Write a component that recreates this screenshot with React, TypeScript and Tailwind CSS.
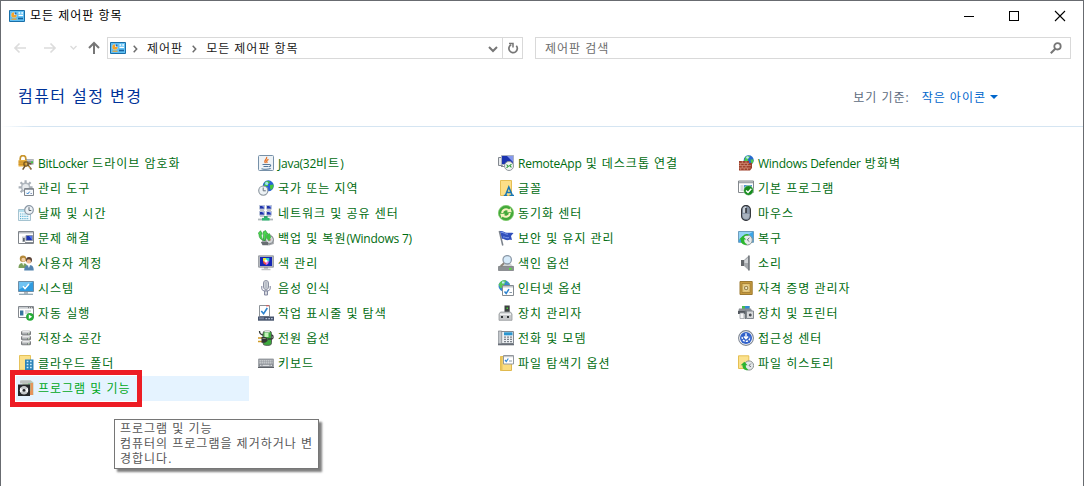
import type { ReactNode } from "react"

type Item = { label: string; icon: ReactNode; active?: boolean }

const columns: Item[][] = [
  [
    {
      label: "BitLocker 드라이브 암호화",
      icon: (
        <>
          <path d="M2.2 6V3.4a2.8 2.8 0 0 1 5.6 0V6" fill="none" stroke="#c9962f" strokeWidth="1.7" />
          <path d="M8 4h7.5v5.5H9z" fill="#8d9298" />
          <path d="M9 4.5h6v1.2H9z" fill="#d6dadd" />
          <path d="M13 6.5h2V8h-2z" fill="#3fd23f" />
          <path d="M.5 5h8.3v6.5H.5z" fill="#e8b040" />
          <path d="M.5 7h8.3M.5 9.2h8.3" stroke="#b98022" strokeWidth=".8" />
          <circle cx="8" cy="9" r="2.1" fill="none" stroke="#7a5a22" strokeWidth="1.4" />
          <path d="m7 11-2.3 3.7M9.6 9.5l3.8 5M10 8.2l3.4.8" stroke="#6d5634" strokeWidth="1.5" />
          <path d="m10.5 11 1.8 2.3" stroke="#e7b54c" />
        </>
      ),
    },
    {
      label: "관리 도구",
      icon: (
        <>
          <path d="M7.6.3v14M.6 7.3h14M2.6 2.3l10 10M12.6 2.3l-10 10" stroke="#a9b0b8" strokeWidth="2.2" />
          <circle cx="7.6" cy="7.3" r="4" fill="#e9ecef" stroke="#b0b7be" strokeWidth="1.5" />
          <path d="M6.5 8.5h9v7h-9z" fill="#f7fafc" stroke="#7f858c" />
          <path d="M7 9h8v1H7z" fill="#9aa0a8" />
          <path d="m8.5 12.8 1.2 1.2 2-2.4" fill="none" stroke="#2c7fd0" />
          <path d="M12.5 13.5H14" stroke="#89b" />
        </>
      ),
    },
    {
      label: "날짜 및 시간",
      icon: (
        <>
          <path d="M.5 4.5h12v11H.5z" fill="#eff8fc" stroke="#a5c3d0" />
          <path d="M1 5h11v2H1z" fill="#b5dfee" />
          <path d="M2 9h9M2 11.3h9M2 13.6h9" stroke="#5fb3d4" strokeWidth="1.2" strokeDasharray="1.2 1" />
          <circle cx="11" cy="5" r="4.3" fill="#edf2f6" stroke="#8b98a5" strokeWidth="1.2" />
          <path d="M11 2.2V5.5h2.3" fill="none" stroke="#5c6670" />
        </>
      ),
    },
    {
      label: "문제 해결",
      icon: (
        <>
          <path d="M.5 1.5h15v12H.5z" fill="#fff" stroke="#7e8389" />
          <path d="M1 2h14v1.5H1z" fill="#b8bdc3" />
          <path d="M4 6.5h3.5V12H4z" fill="#c8ccd0" />
          <path d="M5 8h1.7v3.5H5z" fill="#5b6168" />
          <path d="M8 5.5h6.5v5H8z" fill="#1c34b4" stroke="#8b93a8" />
          <path d="M11 6h3v4z" fill="#5577ee" />
          <path d="M7 12h8v1H7z" fill="#858b92" />
        </>
      ),
    },
    {
      label: "사용자 계정",
      icon: (
        <>
          <circle cx="5" cy="3.7" r="3.2" fill="#b58a3b" />
          <circle cx="5.4" cy="4.8" r="2" fill="#f4cfa4" />
          <path d="M.5 13c0-4 2-5 4.5-5s4.5 1.5 4.5 5z" fill="#7ba05b" />
          <path d="m4 8 1.3 2.7L6.7 8z" fill="#e8efe0" />
          <circle cx="11" cy="5" r="3" fill="#594034" />
          <circle cx="10.8" cy="6.4" r="2.2" fill="#efb98f" />
          <path d="M6.2 15.5c0-4.5 2-5.5 4.8-5.5s4.7 1 4.7 5.5z" fill="#5383ae" />
          <path d="m9.5 10 1.4 3 1.4-3z" fill="#e8f1f8" />
        </>
      ),
    },
    {
      label: "시스템",
      icon: (
        <>
          <path d="M.5 1.5h15v10H.5z" fill="#2f9be0" stroke="#6d8da6" />
          <path d="M1 2h14L1 9.5z" fill="#6fc3f3" />
          <path d="m5 6.3 2 2.2 4-4.6" fill="none" stroke="#fff" strokeWidth="1.5" />
          <path d="M6 12h4v2H6z" fill="#b3bac0" />
          <path d="M1 14.3h14" stroke="#8fa5b3" strokeWidth="1.3" />
        </>
      ),
    },
    {
      label: "자동 실행",
      icon: (
        <>
          <path d="M.5 1.5h15v11H.5z" fill="#fff" stroke="#83888e" />
          <path d="M1 2h14v1.7H1z" fill="#c8ccd0" />
          <path d="M10 2.7h1M12 2.7h1M14 2.7h1" stroke="#666" />
          <path d="M2 5.5h3.4v5H2z" fill="#39769f" />
          <path d="M7 6h6M7 8h4" stroke="#aab2ba" />
          <circle cx="12" cy="11.8" r="3.9" fill="#24ab36" />
          <path d="m10.8 9.6 3.3 2.2-3.3 2.2z" fill="#fff" />
        </>
      ),
    },
    {
      label: "저장소 공간",
      icon: (
        <>
          {[1, 6, 11].map((y) => (
            <g key={y}>
              <rect x="3" y={y - 0.3} width="10" height="4.6" rx="1.5" fill="#77797c" />
              <rect x="4" y={y} width="8" height="1.8" rx=".9" fill="#e8e9ea" />
              <path d={`M4.2 ${y + 2.8}h5`} stroke="#c7cacc" />
              <path d={`M10 ${y + 2.8}h1.5`} stroke="#d5f0c8" />
            </g>
          ))}
        </>
      ),
    },
    {
      label: "클라우드 폴더",
      icon: (
        <>
          <path d="M1.5.5h11V15h-11z" fill="#fbe08a" stroke="#e6c35b" />
          <path d="M7 4.5h8.5V16H7z" fill="#2c83b8" />
          <path d="M8.7 6.5h1.7M12 6.5h1.7M8.7 9.5h1.7M12 9.5h1.7M8.7 12.5h1.7M12 12.5h1.7" stroke="#c9ecfb" strokeWidth="1.7" />
        </>
      ),
    },
    {
      label: "프로그램 및 기능",
      active: true,
      icon: (
        <>
          <path d="M3 .5h10l2.5 2V15H9z" fill="#b9cbb4" />
          <path d="M2 .5h11v3H2z" fill="#bcc0bf" />
          <path d="M11 3h4v12h-4z" fill="#e7935c" />
          <path d="M10 3h2.5v8H10z" fill="#8cbf9a" />
          <path d="M0 4.5h12V16H0z" fill="#25282b" />
          <circle cx="6" cy="10.3" r="4.2" fill="#c4c8ca" />
          <path d="m6 10.3 4-2.2v4.3zM6 10.3 2 8v4.5z" fill="#f7f9fa" />
          <circle cx="6" cy="10.3" r="1.4" fill="#25282b" />
        </>
      ),
    },
  ],
  [
    {
      label: "Java(32비트)",
      icon: (
        <>
          <rect x=".5" y=".5" width="15" height="15" rx="1" fill="#eef3f7" stroke="#7690a8" />
          <path d="M8.5 2c1.5 2-3.5 3-1 6M10.5 4.3C8.6 5.3 8.2 6.2 9.2 8" fill="none" stroke="#e76f22" strokeWidth="1.3" />
          <path d="M4.5 9.5h6.8c2 0 1.8 2-.3 2.2M5.5 11.5h5M3.5 13.7c3 .7 7 .6 9.2-.2" fill="none" stroke="#52779a" strokeWidth="1.1" />
        </>
      ),
    },
    {
      label: "국가 또는 지역",
      icon: (
        <>
          <circle cx="10.3" cy="5.8" r="5.5" fill="#2a62d4" />
          <path d="M7 2c3-2 5-.5 5 .5L10 4v2H6zM12 5l3.5-.5c.2 2.500-.7 4.500-2.500 5.500l-1-2z" fill="#45c63c" />
          <circle cx="8.7" cy="3.4" r="1.6" fill="#9ce2fa" />
          <circle cx="5.3" cy="10.6" r="4.6" fill="#edf2f5" stroke="#8b959e" strokeWidth="1.1" />
          <path d="M5.2 7.5v3.3h2.6" fill="none" stroke="#66707a" />
        </>
      ),
    },
    {
      label: "네트워크 및 공유 센터",
      icon: (
        <>
          {["1 0", "8 0", "1 6", "8 6"].map((p) => (
            <g key={p} transform={`translate(${p})`}>
              <path d="M.5.5h5v3.600h-5z" fill="#2133a8" stroke="#b9c3d8" />
              <path d="M3 1h2v2z" fill="#7e96f0" />
              <path d="M1 5.2h4" stroke="#a2a9b0" />
            </g>
          ))}
          <path d="M6 11h3.600V13H6z" fill="#2fa56b" />
          <path d="M0 14.5h15" stroke="#b0b8bc" strokeWidth="1.8" />
          <path d="M4 14.2h7.500" stroke="#2fb873" strokeWidth="2.6" />
        </>
      ),
    },
    {
      label: "백업 및 복원(Windows 7)",
      icon: (
        <>
          <path d="M7 4.5h6l2.8 5V14l-5 1.5L3 13z" fill="#a2a6aa" />
          <circle cx="11.5" cy="9.7" r="4" fill="#d3d6d9" stroke="#83878b" />
          <circle cx="11.5" cy="9.7" r="1.2" fill="#a67864" />
          <path d="M3 12h7v3.3H4.5z" fill="#686d72" />
          <path d="M0 3.5 2.5.7l2 3.5H3.2c0 3 .8 4.5 2.6 6.3C3 10 1 8 1 4.5zM5 2 7.5.5 9.8 4H8.2c0 3-.2 5-1.4 7C4.7 8.5 5 6 5.7 4z" fill="#4bd84f" stroke="#1e8b2b" strokeWidth=".6" />
          <path d="M9 4.500 11.500 3l1.500 4.500L10.500 11 8.500 8z" fill="#3cc442" />
        </>
      ),
    },
    {
      label: "색 관리",
      icon: (
        <>
          <path d="M.6.800h14.800v11.400H.6z" fill="#b9bdc2" stroke="#858a90" strokeWidth=".8" />
          <path d="M2 2h12v9H2z" fill="#1627b5" />
          <path d="M5 3h3v4H5z" fill="#e9e73a" />
          <path d="M8 3h3.300v3.500H8z" fill="#31d3d9" />
          <path d="M5 6h3v4L5.500 8.500z" fill="#f14c44" />
          <path d="M8 6.300h3L10 9l-2 1z" fill="#e36be3" />
          <circle cx="8" cy="6" r="1.6" fill="#fff" />
          <path d="M6 12h4v1.600H6z" fill="#9a9ea3" />
          <path d="M3.500 14.500h9" stroke="#c0c3c6" strokeWidth="1.5" />
        </>
      ),
    },
    {
      label: "음성 인식",
      icon: (
        <>
          <rect x="5.5" y=".5" width="5" height="9" rx="2.5" fill="#eceef1" stroke="#8a8fa0" />
          <path d="M6 3h4M6 5h4M6 7h4M8 1v8" stroke="#a0a5b3" strokeWidth=".8" />
          <path d="M3.8 6v2.8c0 3 8.4 3 8.4 0V6" fill="none" stroke="#7b809a" />
          <path d="M6.5 11h3v4h-3z" fill="#d8dae0" stroke="#7b809a" strokeWidth=".9" />
        </>
      ),
    },
    {
      label: "작업 표시줄 및 탐색",
      icon: (
        <>
          <path d="M1.5.5h10v11h-10z" fill="#fff" stroke="#8c9297" />
          <path d="M8 .8h3" stroke="#d65454" />
          <path d="m3.3 6 2.3 2.7L9.3 3" fill="none" stroke="#2b82ce" strokeWidth="1.6" />
          <path d="M0 11.500h16v4.200H0z" fill="#46536c" />
          <path d="M1 12.300h5v2H1z" fill="#74819b" />
          <path d="M7.500 13.700h1.700M10.300 13.700H12M13 13.700h1.700" stroke="#b4c0d4" strokeWidth="1.2" />
        </>
      ),
    },
    {
      label: "전원 옵션",
      icon: (
        <>
          <rect x="5" y="1" width="8.5" height="14.3" rx="2.5" fill="#3da83d" stroke="#566158" />
          <path d="M6.5 3h4v4h-4z" fill="#c3f2b8" />
          <path d="M6.5.5h5.3v2H6.5z" fill="#dfe4df" />
          <path d="M1.5 1c0 2.5 1 3.5 3.5 4M10 9h3.5c2 0 2.2-3.5.2-4" fill="none" stroke="#363b38" strokeWidth="1.3" />
          <path d="M0 8h4M0 11.5h4" stroke="#cf9a25" strokeWidth="1.6" />
          <path d="M3.500 7H7l2.500 1.300v2.700L7 12.700H3.500z" fill="#343634" />
          <path d="M4.500 8H7l1.500 1H4.500z" fill="#848884" />
        </>
      ),
    },
    {
      label: "키보드",
      icon: (
        <>
          <path d="M.5 4h15v8.500H.5z" fill="#8a8e94" stroke="#a2a6ab" />
          <path d="M1.500 5.800h13M1.500 7.800h13" stroke="#eceeef" strokeWidth="1.2" strokeDasharray="1.3 .7" />
          <path d="M2 10.300h1.500M4.500 10.300h7M12.500 10.300H14" stroke="#eceeef" />
          <path d="M0 12.500h16" stroke="#5d6167" />
        </>
      ),
    },
  ],
  [
    {
      label: "RemoteApp 및 데스크톱 연결",
      icon: (
        <>
          <path d="M.5 2.5h4v8h-4z" fill="#e6e9ed" stroke="#83888f" />
          <path d="M3.5.5h12v9h-12z" fill="#1c34b0" stroke="#aab1c0" />
          <path d="M9 1h6v6z" fill="#8398ee" />
          <path d="M3 11.500h5" stroke="#83888f" />
          <circle cx="11" cy="11" r="4.5" fill="#f1f3f4" stroke="#90969c" />
          <path d="m8.500 9.700 1.800 1.500-1.800 1.600M13.500 9.200l-1.800 1.500 1.800 1.600" fill="none" stroke="#2a9b35" strokeWidth="1.1" />
        </>
      ),
    },
    {
      label: "글꼴",
      icon: (
        <>
          <path d="M2.500.5h11v15h-11z" fill="#fcdf88" stroke="#e5bf55" />
          <path d="M5.800 15.500h3.400M11.500 15.500H16M7.500 15.300 10.800 7l3.500 8.300M8.700 12.500h4.300" fill="none" stroke="#1876b4" strokeWidth="1.5" />
        </>
      ),
    },
    {
      label: "동기화 센터",
      icon: (
        <>
          <circle cx="8" cy="8" r="7.6" fill="#43a83a" stroke="#79c864" strokeWidth=".8" />
          <path d="M4.2 8A3.8 3.8 0 0 1 11 5.7M11.8 8A3.8 3.8 0 0 1 5 10.3" fill="none" stroke="#f7f2c0" strokeWidth="2" />
          <path d="M8.8 7.2h5L12.5 3zM7.2 8.8h-5L3.5 13z" fill="#f7f2c0" />
        </>
      ),
    },
    {
      label: "보안 및 유지 관리",
      icon: (
        <>
          <path d="m1.3 1 3.5 14.5" stroke="#7b828b" strokeWidth="1.5" />
          <path d="M2 1.2c3-.8 4.500 2 7.500 1.500 2 0 3.500-.2 6 .3L13 6l1 4c-3-.7-4 .5-6 0S5 8.500 4 9z" fill="#314fbb" />
          <path d="M3 2.2c3 0 4 2.2 7 2M5 7c2-.4 3 1.3 6 .7" fill="none" stroke="#7d9cec" />
        </>
      ),
    },
    {
      label: "색인 옵션",
      icon: (
        <>
          <path d="M3 9h10l2.500 3H.5z" fill="#d1d4d6" />
          <path d="M.5 11.500h15v4H.5z" fill="#8c9093" stroke="#74787b" strokeWidth=".7" />
          <path d="M11 13h2.500v1.700H11z" fill="#51e63b" />
          <circle cx="9.2" cy="4.8" r="4.2" fill="#d7ebfa" stroke="#8d9aa8" strokeWidth="1.3" />
          <path d="M6 8 2.8 11.3" stroke="#8b8378" strokeWidth="1.8" />
        </>
      ),
    },
    {
      label: "인터넷 옵션",
      icon: (
        <>
          <circle cx="6.3" cy="6" r="5.8" fill="#3186d4" />
          <path d="M1 4.5C2.5 1.5 5 0 8 .8L6 4v2L2.7 8zM8.5 3l3 .5" fill="#5ac954" stroke="#5ac954" strokeWidth=".6" />
          <path d="M4 1.5h2.5v2H4z" fill="#bce9f8" />
          <path d="M4.5 5.5h11v10h-11z" fill="#fff" stroke="#858b91" />
          <path d="M5 6h10v1.5H5z" fill="#c1c6cb" />
          <path d="m6.500 11.500 1.700 2 2.800-4.300" fill="none" stroke="#2c83d0" strokeWidth="1.5" />
          <path d="M11.500 12.500H14" stroke="#89a" />
        </>
      ),
    },
    {
      label: "장치 관리자",
      icon: (
        <>
          <path d="M6.500.5h5.200V8H6.500z" fill="#3d4041" />
          <path d="M8.500 2.500H10V4H8.500z" fill="#45d23a" />
          <path d="M2.500 7h10l1.500 2v6.300H1V9z" fill="#c6c8ca" stroke="#96999c" strokeWidth=".8" />
          <path d="M2 8.500h11v1.600H2z" fill="#f1f2f3" />
          <path d="M3 11h2v2H3zM9 11h2v2H9z" fill="#34383a" />
        </>
      ),
    },
    {
      label: "전화 및 모뎀",
      icon: (
        <>
          <path d="M1.5 1.5h14v12h-14z" fill="#eceff2" stroke="#848a91" />
          <path d="M.3 1h3.400v13H.3z" fill="#c3c7cb" stroke="#787e85" strokeWidth=".7" />
          <path d="M6 2.300h8.500v3H6z" fill="#2995cf" />
          <path d="M6 7.200h8.500M6 9.400h8.500M6 11.600h8.500" stroke="#7d838b" strokeWidth="1.2" strokeDasharray="2 1" />
          <path d="M0 14.500h16" stroke="#676d77" strokeWidth="1.6" />
        </>
      ),
    },
    {
      label: "파일 탐색기 옵션",
      icon: (
        <>
          <path d="M2.5 1.5h11v14h-11z" fill="#fadc80" stroke="#e0b94e" />
          <path d="M2.5 1.5h2v14h-2z" fill="#e9c45b" />
          <path d="M5.5.5h10v8.500h-10z" fill="#fff" stroke="#93989d" />
          <path d="M6 1h9v1.200H6z" fill="#c4c8cc" />
          <path d="m7 5 1.300 1.500 2-3" fill="none" stroke="#3189d4" strokeWidth="1.2" />
          <path d="M11 6h3" stroke="#89a" />
        </>
      ),
    },
  ],
  [
    {
      label: "Windows Defender 방화벽",
      icon: (
        <>
          <circle cx="10.7" cy="5.2" r="5" fill="#2469cf" />
          <path d="M7.5 1.8c2-1.5 4-1.5 4.7-.3L10 4v2H6zM12.500 4.500l3 0c.3 2-.7 4-2.300 5z" fill="#52c94b" />
          <circle cx="9.5" cy="2.5" r="1.3" fill="#bdecfb" />
          <path d="M1 6h10v2.200l3-.4V13l-2 2.500H1z" fill="#9b3f2c" />
          <path d="M1 8.300h10M1 10.600h12M1 13h11.500M4.300 6v2.300M8 6v2.300M2.700 8.300v2.300M6.200 8.300v2.300M9.600 8.300v2.300M4.300 10.600V13M8 10.600V13M2.700 13v2.500M6.200 13v2.500M9.600 13v2.500" stroke="#db9a83" strokeWidth=".7" />
        </>
      ),
    },
    {
      label: "기본 프로그램",
      icon: (
        <>
          <path d="M.5 1h15v11.500H.5z" fill="#fff" stroke="#83888d" />
          <path d="M1 1.500h14v1.800H1z" fill="#a3a8ad" />
          <path d="M2.500 5h3v6h-3z" fill="#d7dce1" />
          <path d="M6 5h8v6H6z" fill="#4e95d6" />
          <circle cx="10.5" cy="10.5" r="4.9" fill="#168b1e" stroke="#fff" strokeWidth=".5" />
          <path d="m8 10.500 2 2 3.300-3.800" fill="none" stroke="#fff" strokeWidth="1.5" />
        </>
      ),
    },
    {
      label: "마우스",
      icon: (
        <>
          <rect x="3.6" y=".6" width="8.8" height="14.8" rx="4.2" fill="#8794a5" stroke="#2e3136" strokeWidth="1.1" />
          <path d="M5 3.500C5.700 2 6.500 1.500 8 1.500v6.300H5z" fill="#cbd2da" />
          <path d="M4.500 9h7c0 3-1.200 5-3.500 5s-3.500-2-3.500-5z" fill="#a9b3bf" />
          <path d="M8 3v5" stroke="#2b2e33" strokeWidth="1.5" />
        </>
      ),
    },
    {
      label: "복구",
      icon: (
        <>
          <path d="M.5 1.5h15v10.800H.5z" fill="#3ba5e8" stroke="#6d9dbd" />
          <path d="M1 2h13.500L1 10z" fill="#93d4f6" />
          <circle cx="9.3" cy="10" r="5" fill="#e6ebec" stroke="#8c9696" />
          <path d="M8.500 15C4 15 2.500 12.500 2.800 9.600H1L4.700 6l3.500 3.600H6.300c-.2 2.400.5 3.700 2.500 4.300z" fill="#2bb62d" />
          <path d="M5 7c1-2 3-2.600 5.500-2" fill="none" stroke="#2bb62d" strokeWidth="1.4" />
          <path d="m9.300 10 2-2.300M9.300 10l2 1.500" stroke="#556" strokeWidth=".8" />
        </>
      ),
    },
    {
      label: "소리",
      icon: (
        <>
          <path d="M3 5h3.500v6H3z" fill="#63676b" />
          <path d="M6 5 10.300 1v14L6 11z" fill="#a6aaae" />
          <path d="M6.500 5.500 10 3v5H6.500z" fill="#d1d4d7" />
          <path d="M10 .5h1.800v15H10z" fill="#787d82" />
        </>
      ),
    },
    {
      label: "자격 증명 관리자",
      icon: (
        <>
          <path d="M2 1.500h12.200v13H2z" fill="#c69a3e" stroke="#9d7a32" />
          <path d="M4 3.500h8.200v9H4z" fill="#e2c170" stroke="#9f7b31" strokeWidth=".8" />
          <circle cx="8.1" cy="8" r="2.8" fill="#a0894f" stroke="#f4e1a7" strokeWidth=".8" />
          <circle cx="8.1" cy="8" r="1" fill="#fff7da" />
        </>
      ),
    },
    {
      label: "장치 및 프린터",
      icon: (
        <>
          <path d="M4 1h7.500v3H4z" fill="#48bd4b" />
          <path d="M7 1h4.500v3H7z" fill="#3288d8" />
          <path d="M1 3.500h12l1.500 3.500H0z" fill="#898e94" />
          <path d="M0 6h8v3H0z" fill="#52575e" />
          <path d="M2 8h4v5.500H2z" fill="#f5f6f7" stroke="#8e9399" strokeWidth=".7" />
          <path d="M8.500 6h7v7.500h-7z" fill="#d2d5d8" stroke="#848a90" />
          <circle cx="12.2" cy="10" r="2" fill="#4a4f55" stroke="#f4f4f4" strokeWidth=".8" />
          <path d="M6.700 5.500h1.600V14H6.700z" fill="#6f757b" />
        </>
      ),
    },
    {
      label: "접근성 센터",
      icon: (
        <>
          <circle cx="8" cy="8" r="7.4" fill="#fff" stroke="#7d8592" strokeWidth="1.1" />
          <circle cx="8" cy="8" r="6" fill="#3161c9" />
          <path d="M8 3.300v5M5.900 6.500 8 8.800l2.100-2.300" fill="none" stroke="#fff" strokeWidth="1.4" />
          <path d="M4.200 6.800c-.7 6 8.300 6 7.600 0" fill="none" stroke="#fff" strokeWidth="1.3" strokeDasharray="2.2 1" />
        </>
      ),
    },
    {
      label: "파일 히스토리",
      icon: (
        <>
          <path d="M.5.8h10.300v12.700H.5z" fill="#fbe18d" stroke="#e5bf52" />
          <circle cx="11" cy="10.5" r="4.6" fill="#e3e7e8" stroke="#8b9191" />
          <path d="M9.500 15.300C6 15.300 4.300 13 4.500 10.300H2.700l3.600-3.600 3.300 3.600H7.800c-.1 2 .5 3.300 2.200 4z" fill="#2db431" />
          <path d="m11 10.500 2-2M11 10.500l2 1.300" stroke="#556" strokeWidth=".8" />
        </>
      ),
    },
  ],
]

function PanelIcon() {
  return (
    <svg width="16" height="12" viewBox="0 0 16 12" className="shrink-0">
      <path d="M.5.5h15v11H.5z" fill="#62c0f4" stroke="#1a6fa8" />
      <circle cx="5" cy="5" r="2.7" fill="#fff" />
      <path d="M5 5V2.3A2.7 2.7 0 1 0 7.7 5z" fill="#f0a22c" />
      <path d="M5.6 4.4V2a2.5 2.5 0 0 1 2.3 2.4z" fill="#1769b4" />
      <path d="M9.5 3h1.7M12.3 3H14M9.5 5.3H14" stroke="#fff" strokeWidth="1.3" />
      <path d="M2.5 9.2h5" stroke="#f0a22c" strokeWidth="1.2" />
      <path d="M9 8.500h5" stroke="#16629f" strokeWidth="1.6" />
    </svg>
  )
}

// Latin runs are set tighter than the Hangul around them
function Label({ text }: { text: string }) {
  const parts = text.split(/([A-Za-z0-9()]+(?: [A-Za-z0-9()]+)*)/).filter(Boolean)
  return (
    <span className="whitespace-pre">
      {parts.map((part, i) => (
        <span key={i} className={/[A-Za-z0-9]/.test(part) ? "tracking-[-0.25px]" : ""}>
          {part}
        </span>
      ))}
    </span>
  )
}

function TitleBar() {
  return (
    <header className="flex h-[29px] shrink-0 items-center pl-2 text-black">
      <PanelIcon />
      <h1 className="ml-[5px] flex-1">모든 제어판 항목</h1>
      <svg width="120" height="12" viewBox="0 0 120 12" fill="none" stroke="#000" className="mr-[9px]">
        <path d="M10 6.500h10M55.500 1.500h9v9h-9z" shapeRendering="crispEdges" />
        <path d="m101 1 10 10M111 1 101 11" strokeWidth="1.1" />
      </svg>
    </header>
  )
}

function Crumb({ text }: { text: string }) {
  return (
    <>
      <svg width="5" height="8" viewBox="0 0 5 8" fill="none" stroke="#6d6d6d" strokeWidth="1.5" className="mt-0.5">
        <path d="m.7.8 3 3.2-3 3.2" />
      </svg>
      <span className="mr-[9px] ml-[9px]">{text}</span>
    </>
  )
}

function NavBar() {
  return (
    <nav className="mt-[7px] flex h-[22px] shrink-0 items-center pr-3">
      <svg width="106" height="22" viewBox="0 0 106 22" fill="none" stroke="#dcdcdc" strokeWidth="1.7" className="shrink-0">
        <path d="M25 11H14.500M18.500 6.500 14 11l4.500 4.500" />
        <path d="M43 11h10.500M49.500 6.500 54 11l-4.500 4.500" />
        <path d="m69.500 9 3 3 3-3" strokeWidth="1.4" />
        <path d="M93 17V6.500M88 11l5-5 5 5" stroke="#767676" strokeWidth="2" />
      </svg>
      <div className="flex h-full w-[416px] items-center border border-[#d9d9d9] pl-0.5 text-[#1a1a1a]">
        <PanelIcon />
        <div className="ml-[7px] flex flex-1 items-center">
          <Crumb text="제어판" />
          <Crumb text="모든 제어판 항목" />
        </div>
        <svg width="10" height="7" viewBox="0 0 10 7" fill="none" stroke="#767676" strokeWidth="2" className="mt-0.5 mr-1">
          <path d="m1 1 4 4 4-4" />
        </svg>
        <div className="flex h-full w-5 items-center justify-center border-l border-[#d9d9d9]">
          <svg width="12" height="12" viewBox="0 0 12 12" fill="none" stroke="#767676" strokeWidth="1.7">
            <path d="M9.300 3.700A4.200 4.200 0 1 1 4.200 2.700" />
            <path d="M2 1.500h4v4" strokeWidth="1.5" />
          </svg>
        </div>
      </div>
      <div className="ml-3 flex h-full flex-1 items-center justify-between border border-[#d9d9d9] pr-2 pl-[9px] text-[#6d6d6d]">
        <span>제어판 검색</span>
        <svg width="12" height="12" viewBox="0 0 12 12" fill="none" stroke="#767676">
          <circle cx="7.5" cy="4.3" r="3.2" strokeWidth="1.8" />
          <path d="M5.300 6.700.800 11.200" strokeWidth="2" />
        </svg>
      </div>
    </nav>
  )
}

export default function App() {
  return (
    <div className="relative flex h-[486px] w-[1084px] flex-col overflow-hidden border-x border-t border-[#686b70] bg-white font-['Open_Sans','Noto_Sans_CJK_KR',sans-serif] text-xs leading-[15px] tracking-[1px]">
      <TitleBar />
      <NavBar />

      <div className="flex h-[67px] shrink-0 items-center pt-[9px] pr-[85px] pl-[17px]">
        <h2 className="mb-0.5 flex-1 text-base leading-5 tracking-[1.45px] text-[#003399]">컴퓨터 설정 변경</h2>
        <span className="text-[#5c6b7d]">보기 기준:</span>
        <button className="ml-3 flex items-center gap-1 text-[#0066cc]">
          작은 아이콘
          <svg width="8" height="4" viewBox="0 0 8 4">
            <path d="M0 0h8L4 4z" fill="#0066cc" />
          </svg>
        </button>
      </div>
      <div className="h-px shrink-0 bg-linear-to-r from-white via-[#d5e5f2] via-3% to-[#d5e5f2] to-97%" />

      <main className="mt-6 grid grid-cols-[repeat(4,233px)] gap-x-[7px] pl-[15px]">
        {columns.map((items, i) => (
          <ul key={i}>
            {items.map((item) => (
              <li
                key={item.label}
                className={`flex h-[25px] items-center gap-1 pl-0.5 ${item.active ? "bg-[#e5f3ff] text-[#00a822]" : "text-[#006c10]"}`}
              >
                <svg width="16" height="16" viewBox="0 0 16 16" className="mb-px shrink-0">
                  {item.icon}
                </svg>
                <Label text={item.label} />
              </li>
            ))}
          </ul>
        ))}
      </main>

      {/* Highlight frame */}
      <div className="absolute top-[369px] left-[9px] h-[37px] w-[132px] border-[5px] border-[#ed1c24]" />

      {/* Tooltip */}
      <div className="absolute top-[418px] left-[113px] h-[50px] w-[205px] border border-[#767676] bg-white pt-px pl-[5px] text-[#575757] shadow-[3px_3px_2px_rgba(0,0,0,0.5)]">
        <p>프로그램 및 기능</p>
        <p>컴퓨터의 프로그램을 제거하거나 변</p>
        <p>경합니다.</p>
      </div>
    </div>
  )
}
